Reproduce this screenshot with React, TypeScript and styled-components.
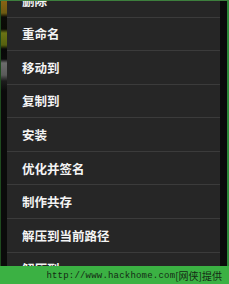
import styled, { createGlobalStyle } from "styled-components";

const GlobalStyle = createGlobalStyle`
  html, body {
    margin: 0;
    padding: 0;
    background: #0a0a0a;
  }
`;

const Screen = styled.div`
  width: 229px;
  height: 284px;
  display: flex;
  flex-direction: column;
  overflow: hidden;
  border-top: 1px solid #3d7f3d;
  box-sizing: border-box;
`;

const Stage = styled.div`
  flex: 1;
  min-height: 0;
  display: flex;
  overflow: hidden;
`;

const LeftEdge = styled.div`
  width: 7px;
  flex-shrink: 0;
  border-left: 1px solid #1f4a1f;
  box-sizing: border-box;
  background: linear-gradient(
    to bottom,
    #8a6314 0px,
    #6c5a12 12px,
    #0c0c08 16px,
    #0a0a06 28px,
    #6b7314 32px,
    #56600f 44px,
    #080808 48px,
    #0a0a0a 58px,
    #6c6c6c 62px,
    #5a5a5a 74px,
    #1c1c1c 80px,
    #0b0b0b 90px,
    #0b0b0b 100%
  );
`;

const Menu = styled.ul`
  width: 213px;
  flex-shrink: 0;
  margin: -17px 0 0;
  padding: 0;
  list-style: none;
  background: #262626;
`;

const MenuItem = styled.li`
  height: 33.57px;
  box-sizing: border-box;
  display: flex;
  align-items: center;
  padding-left: 15px;
  border-bottom: 1px solid #3b3b3b;
  color: #f4f4f4;
  font-family: "Noto Sans CJK SC", "Noto Sans", sans-serif;
  font-size: 12.5px;
  font-weight: 600;
`;

const RightEdge = styled.div`
  width: 7px;
  flex-shrink: 0;
  background: #0a0b0a;
`;

const GreenLine = styled.div`
  flex: 1;
  background: #2f8a3a;
`;

const Footer = styled.div`
  height: 18px;
  flex-shrink: 0;
  background: #3bb143;
  display: flex;
  align-items: center;
  justify-content: flex-end;
  padding: 1px 7px 0 0;
  box-sizing: border-box;
  color: #142a14;
  font-family: "Liberation Mono", "Noto Sans CJK SC", monospace;
  font-size: 9px;
  letter-spacing: 0.2px;
  white-space: nowrap;
`;

const Cjk = styled.span`
  font-family: "Noto Sans CJK SC", sans-serif;
  font-size: 10px;
  letter-spacing: 0;
`;

const items = [
  "删除",
  "重命名",
  "移动到",
  "复制到",
  "安装",
  "优化并签名",
  "制作共存",
  "解压到当前路径",
  "解压到",
];

export default function App() {
  return (
    <>
      <GlobalStyle />
      <Screen>
        <Stage>
          <LeftEdge />
          <Menu>
            {items.map((label) => (
              <MenuItem key={label}>{label}</MenuItem>
            ))}
          </Menu>
          <RightEdge />
          <GreenLine />
        </Stage>
        <Footer>
          http://www.hackhome.com<Cjk>[网侠]提供</Cjk>
        </Footer>
      </Screen>
    </>
  );
}
